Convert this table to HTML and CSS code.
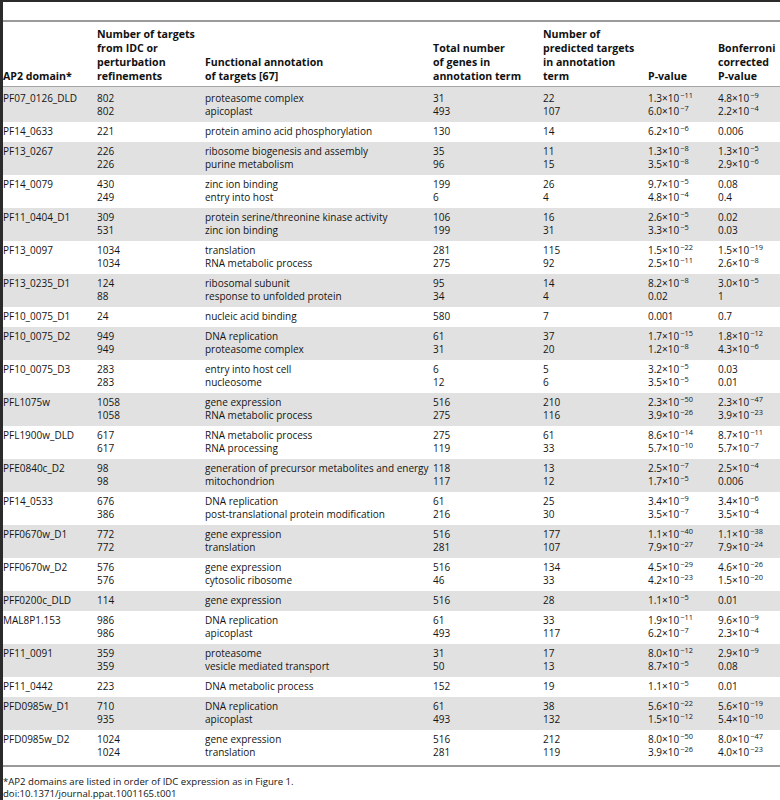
FILE: index.html
```html
<!DOCTYPE html>
<html lang="en">

<head>
    <meta charset="UTF-8">
    <title>Table 1</title>
    <link rel="stylesheet" href="styles.css">
</head>

<body>
    <div class="frame">
        <table class="tbl">
            <colgroup>
                <col class="c1">
                <col class="c2">
                <col class="c3">
                <col class="c4">
                <col class="c5">
                <col class="c6">
                <col class="c7">
            </colgroup>
            <thead>
                <tr>
                    <th>AP2 domain*</th>
                    <th>Number of targets<br>from IDC or<br>perturbation<br>refinements</th>
                    <th>Functional annotation<br>of targets [67]</th>
                    <th>Total number<br>of genes in<br>annotation term</th>
                    <th>Number of<br>predicted targets<br>in annotation<br>term</th>
                    <th>P-value</th>
                    <th>Bonferroni<br>corrected<br>P-value</th>
                </tr>
            </thead>
            <tbody>
                <tr>
                    <td>PF07_0126_DLD</td>
                    <td>802<br>802</td>
                    <td>proteasome complex<br>apicoplast</td>
                    <td>31<br>493</td>
                    <td>22<br>107</td>
                    <td>1.3×10<sup>−11</sup><br>6.0×10<sup>−7</sup></td>
                    <td>4.8×10<sup>−9</sup><br>2.2×10<sup>−4</sup></td>
                </tr>
                <tr>
                    <td>PF14_0633</td>
                    <td>221</td>
                    <td>protein amino acid phosphorylation</td>
                    <td>130</td>
                    <td>14</td>
                    <td>6.2×10<sup>−6</sup></td>
                    <td>0.006</td>
                </tr>
                <tr>
                    <td>PF13_0267</td>
                    <td>226<br>226</td>
                    <td>ribosome biogenesis and assembly<br>purine metabolism</td>
                    <td>35<br>96</td>
                    <td>11<br>15</td>
                    <td>1.3×10<sup>−8</sup><br>3.5×10<sup>−8</sup></td>
                    <td>1.3×10<sup>−5</sup><br>2.9×10<sup>−6</sup></td>
                </tr>
                <tr>
                    <td>PF14_0079</td>
                    <td>430<br>249</td>
                    <td>zinc ion binding<br>entry into host</td>
                    <td>199<br>6</td>
                    <td>26<br>4</td>
                    <td>9.7×10<sup>−5</sup><br>4.8×10<sup>−4</sup></td>
                    <td>0.08<br>0.4</td>
                </tr>
                <tr>
                    <td>PF11_0404_D1</td>
                    <td>309<br>531</td>
                    <td>protein serine/threonine kinase activity<br>zinc ion binding</td>
                    <td>106<br>199</td>
                    <td>16<br>31</td>
                    <td>2.6×10<sup>−5</sup><br>3.3×10<sup>−5</sup></td>
                    <td>0.02<br>0.03</td>
                </tr>
                <tr>
                    <td>PF13_0097</td>
                    <td>1034<br>1034</td>
                    <td>translation<br>RNA metabolic process</td>
                    <td>281<br>275</td>
                    <td>115<br>92</td>
                    <td>1.5×10<sup>−22</sup><br>2.5×10<sup>−11</sup></td>
                    <td>1.5×10<sup>−19</sup><br>2.6×10<sup>−8</sup></td>
                </tr>
                <tr>
                    <td>PF13_0235_D1</td>
                    <td>124<br>88</td>
                    <td>ribosomal subunit<br>response to unfolded protein</td>
                    <td>95<br>34</td>
                    <td>14<br>4</td>
                    <td>8.2×10<sup>−8</sup><br>0.02</td>
                    <td>3.0×10<sup>−5</sup><br>1</td>
                </tr>
                <tr>
                    <td>PF10_0075_D1</td>
                    <td>24</td>
                    <td>nucleic acid binding</td>
                    <td>580</td>
                    <td>7</td>
                    <td>0.001</td>
                    <td>0.7</td>
                </tr>
                <tr>
                    <td>PF10_0075_D2</td>
                    <td>949<br>949</td>
                    <td>DNA replication<br>proteasome complex</td>
                    <td>61<br>31</td>
                    <td>37<br>20</td>
                    <td>1.7×10<sup>−15</sup><br>1.2×10<sup>−8</sup></td>
                    <td>1.8×10<sup>−12</sup><br>4.3×10<sup>−6</sup></td>
                </tr>
                <tr>
                    <td>PF10_0075_D3</td>
                    <td>283<br>283</td>
                    <td>entry into host cell<br>nucleosome</td>
                    <td>6<br>12</td>
                    <td>5<br>6</td>
                    <td>3.2×10<sup>−5</sup><br>3.5×10<sup>−5</sup></td>
                    <td>0.03<br>0.01</td>
                </tr>
                <tr>
                    <td>PFL1075w</td>
                    <td>1058<br>1058</td>
                    <td>gene expression<br>RNA metabolic process</td>
                    <td>516<br>275</td>
                    <td>210<br>116</td>
                    <td>2.3×10<sup>−50</sup><br>3.9×10<sup>−26</sup></td>
                    <td>2.3×10<sup>−47</sup><br>3.9×10<sup>−23</sup></td>
                </tr>
                <tr>
                    <td>PFL1900w_DLD</td>
                    <td>617<br>617</td>
                    <td>RNA metabolic process<br>RNA processing</td>
                    <td>275<br>119</td>
                    <td>61<br>33</td>
                    <td>8.6×10<sup>−14</sup><br>5.7×10<sup>−10</sup></td>
                    <td>8.7×10<sup>−11</sup><br>5.7×10<sup>−7</sup></td>
                </tr>
                <tr>
                    <td>PFE0840c_D2</td>
                    <td>98<br>98</td>
                    <td>generation of precursor metabolites and energy<br>mitochondrion</td>
                    <td>118<br>117</td>
                    <td>13<br>12</td>
                    <td>2.5×10<sup>−7</sup><br>1.7×10<sup>−5</sup></td>
                    <td>2.5×10<sup>−4</sup><br>0.006</td>
                </tr>
                <tr>
                    <td>PF14_0533</td>
                    <td>676<br>386</td>
                    <td>DNA replication<br>post-translational protein modification</td>
                    <td>61<br>216</td>
                    <td>25<br>30</td>
                    <td>3.4×10<sup>−9</sup><br>3.5×10<sup>−7</sup></td>
                    <td>3.4×10<sup>−6</sup><br>3.5×10<sup>−4</sup></td>
                </tr>
                <tr>
                    <td>PFF0670w_D1</td>
                    <td>772<br>772</td>
                    <td>gene expression<br>translation</td>
                    <td>516<br>281</td>
                    <td>177<br>107</td>
                    <td>1.1×10<sup>−40</sup><br>7.9×10<sup>−27</sup></td>
                    <td>1.1×10<sup>−38</sup><br>7.9×10<sup>−24</sup></td>
                </tr>
                <tr>
                    <td>PFF0670w_D2</td>
                    <td>576<br>576</td>
                    <td>gene expression<br>cytosolic ribosome</td>
                    <td>516<br>46</td>
                    <td>134<br>33</td>
                    <td>4.5×10<sup>−29</sup><br>4.2×10<sup>−23</sup></td>
                    <td>4.6×10<sup>−26</sup><br>1.5×10<sup>−20</sup></td>
                </tr>
                <tr>
                    <td>PFF0200c_DLD</td>
                    <td>114</td>
                    <td>gene expression</td>
                    <td>516</td>
                    <td>28</td>
                    <td>1.1×10<sup>−5</sup></td>
                    <td>0.01</td>
                </tr>
                <tr>
                    <td>MAL8P1.153</td>
                    <td>986<br>986</td>
                    <td>DNA replication<br>apicoplast</td>
                    <td>61<br>493</td>
                    <td>33<br>117</td>
                    <td>1.9×10<sup>−11</sup><br>6.2×10<sup>−7</sup></td>
                    <td>9.6×10<sup>−9</sup><br>2.3×10<sup>−4</sup></td>
                </tr>
                <tr>
                    <td>PF11_0091</td>
                    <td>359<br>359</td>
                    <td>proteasome<br>vesicle mediated transport</td>
                    <td>31<br>50</td>
                    <td>17<br>13</td>
                    <td>8.0×10<sup>−12</sup><br>8.7×10<sup>−5</sup></td>
                    <td>2.9×10<sup>−9</sup><br>0.08</td>
                </tr>
                <tr>
                    <td>PF11_0442</td>
                    <td>223</td>
                    <td>DNA metabolic process</td>
                    <td>152</td>
                    <td>19</td>
                    <td>1.1×10<sup>−5</sup></td>
                    <td>0.01</td>
                </tr>
                <tr>
                    <td>PFD0985w_D1</td>
                    <td>710<br>935</td>
                    <td>DNA replication<br>apicoplast</td>
                    <td>61<br>493</td>
                    <td>38<br>132</td>
                    <td>5.6×10<sup>−22</sup><br>1.5×10<sup>−12</sup></td>
                    <td>5.6×10<sup>−19</sup><br>5.4×10<sup>−10</sup></td>
                </tr>
                <tr>
                    <td>PFD0985w_D2</td>
                    <td>1024<br>1024</td>
                    <td>gene expression<br>translation</td>
                    <td>516<br>281</td>
                    <td>212<br>119</td>
                    <td>8.0×10<sup>−50</sup><br>3.9×10<sup>−26</sup></td>
                    <td>8.0×10<sup>−47</sup><br>4.0×10<sup>−23</sup></td>
                </tr>
            </tbody>
        </table>

        <p class="note">*AP2 domains are listed in order of IDC expression as in Figure 1.<br>doi:10.1371/journal.ppat.1001165.t001</p>
    </div>
</body>

</html>
```

FILE: styles.css
```css
/* page */
body {
    margin: 0;
    font-family: "Open Sans", "Liberation Sans", sans-serif;
    font-size: 10px;
    color: #141414;
    background: #fff;
}

/* dark frame on the left and top */
.frame {
    border-left: 3px solid #2b2b2b;
    border-top: 2px solid #2b2b2b;
    padding-top: 18px;
    min-height: 800px;
}

/* table */
.tbl {
    width: 100%;
    border-collapse: collapse;
    table-layout: fixed;
    border-top: 2px solid #9a9a9a;
    border-bottom: 2px solid #9a9a9a;
}

.c1 { width: 94px; }
.c2 { width: 108px; }
.c3 { width: 228px; }
.c4 { width: 110px; }
.c5 { width: 105px; }
.c6 { width: 70px; }

/* header */
.tbl th {
    text-align: left;
    vertical-align: bottom;
    font-size: 10.6px;
    font-weight: 700;
    line-height: 14px;
    padding: 5px 0 3px;
    color: #111;
    border-bottom: 1px solid #a5a5a5;
}

/* body cells */
.tbl td {
    vertical-align: top;
    line-height: 13px;
    padding: 3px 0 4px;
    white-space: nowrap;
}

.tbl tbody tr:nth-child(odd) {
    background: #e1e1e1;
}

.tbl tbody tr:first-child td {
    padding-top: 5px;
}

.tbl tbody tr:last-child td {
    padding-bottom: 6px;
}

/* exponent */
sup {
    font-size: 7.4px;
    line-height: 0;
    vertical-align: 4px;
    margin-left: 1px;
}

/* footnote */
.note {
    margin: 9px 0 0;
    line-height: 12px;
    font-size: 9.6px;
}
```
